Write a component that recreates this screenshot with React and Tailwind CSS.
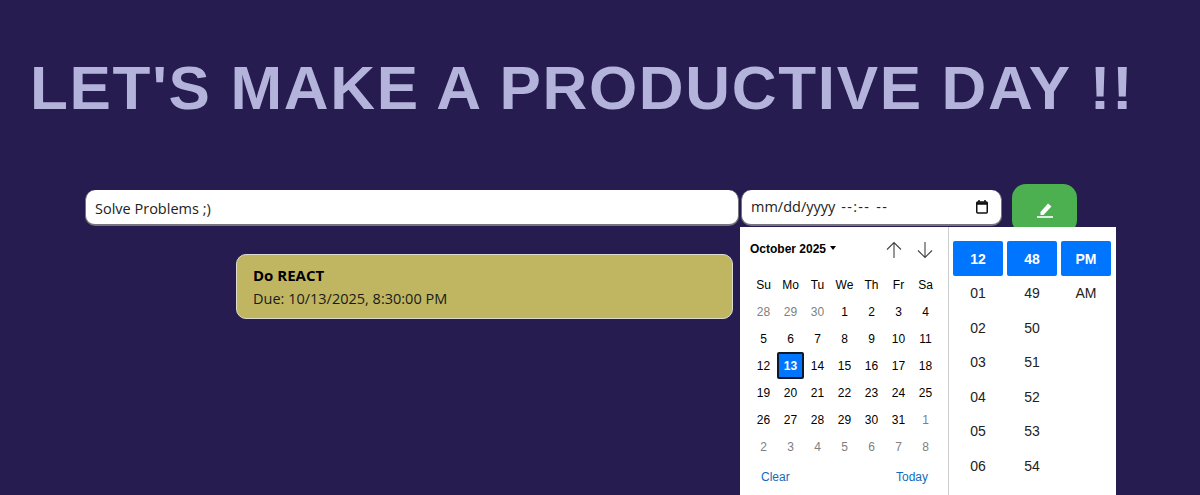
const weekDays = ["Su", "Mo", "Tu", "We", "Th", "Fr", "Sa"];
const prevDays = [28, 29, 30];
const monthDays = Array.from({ length: 31 }, (_, i) => i + 1);
const nextDays = [1, 2, 3, 4, 5, 6, 7, 8];
const hours = ["12", "01", "02", "03", "04", "05", "06"];
const minutes = ["48", "49", "50", "51", "52", "53", "54"];
const periods = ["PM", "AM"];

function TimeColumn({ items }) {
  return (
    <div className="flex w-[50px] flex-col">
      {items.map((item, index) => (
        <div
          key={item}
          className={
            index === 0
              ? "flex h-[35px] items-center justify-center rounded-[2px] bg-[#0075ff] text-sm font-bold text-white"
              : "flex h-[34.5px] items-center justify-center text-sm text-[#222]"
          }
        >
          {item}
        </div>
      ))}
    </div>
  );
}

function DatePopup() {
  return (
    <div className="absolute left-[655px] top-[43px] flex h-[268px] w-[376px] overflow-hidden bg-white font-['Liberation_Sans',sans-serif] text-black">
      <div className="w-[209px] border-r border-[#cfcfcf] pl-[10px]">
        <div className="flex h-[44px] items-start pt-[14px]">
          <span className="text-xs font-bold">October 2025</span>
          <span className="ml-[4px] mt-[5px] h-0 w-0 border-x-[3.5px] border-t-[4px] border-x-transparent border-t-black" />
          <svg className="ml-[49px]" width="18" height="18" viewBox="0 0 18 18" fill="none" stroke="#444" strokeWidth="1.1">
            <path d="M9 17V1.5M2 8.5 9 1.5l7 7" />
          </svg>
          <svg className="ml-[13px]" width="18" height="18" viewBox="0 0 18 18" fill="none" stroke="#444" strokeWidth="1.1">
            <path d="M9 1v15.5M2 9.5l7 7 7-7" />
          </svg>
        </div>
        <div className="grid w-[189px] grid-cols-7 text-xs">
          {weekDays.map((day) => (
            <div key={day} className="flex h-[27px] items-center justify-center">
              {day}
            </div>
          ))}
          {prevDays.map((day) => (
            <div key={"p" + day} className="flex h-[27px] items-center justify-center text-[#808080]">
              {day}
            </div>
          ))}
          {monthDays.map((day) => (
            <div
              key={day}
              className={
                day === 13
                  ? "flex h-[27px] items-center justify-center rounded-[2px] border-2 border-[#101828] bg-[#0075ff] font-bold text-white"
                  : "flex h-[27px] items-center justify-center"
              }
            >
              {day}
            </div>
          ))}
          {nextDays.map((day) => (
            <div key={"n" + day} className="flex h-[27px] items-center justify-center text-[#808080]">
              {day}
            </div>
          ))}
        </div>
        <div className="flex w-[189px] justify-between px-[11px] pt-[9px] text-xs text-[#0f6cbd]">
          <span>Clear</span>
          <span>Today</span>
        </div>
      </div>
      <div className="flex gap-[4px] pl-[4px] pt-[14px]">
        <TimeColumn items={hours} />
        <TimeColumn items={minutes} />
        <TimeColumn items={periods} />
      </div>
    </div>
  );
}

export default function App() {
  return (
    <div className="h-[495px] overflow-hidden bg-[#261c4f] font-['Open_Sans',sans-serif]">
      <h1 className="whitespace-nowrap pl-[30px] pt-[52px] font-['Liberation_Sans',sans-serif] text-[62px] leading-[72px] font-bold tracking-[1.68px] text-[#b3b3dc]">
        LET'S MAKE A PRODUCTIVE DAY !!
      </h1>
      <div className="relative ml-[85px] mt-[60px] w-[992px]">
        <div className="flex items-start">
          <input
            type="text"
            defaultValue="Solve Problems ;)"
            className="mt-[6px] h-[36px] w-[654px] rounded-[10px] border-x border-b-2 border-[#77747f] bg-white px-[9px] pt-[2px] text-[14.5px] text-[#222] outline-none"
          />
          <div className="ml-[2px] mt-[6px] flex h-[36px] w-[261px] items-center justify-between rounded-[10px] border-x border-b-2 border-[#77747f] bg-white pl-[9px] pr-[13px] text-[14.5px] text-[#222]">
            <span className="flex whitespace-pre">
              <span>mm/dd/yyyy</span>
              <span className="ml-[6px] tracking-[1.3px]">--:--</span>
              <span className="ml-[6px] tracking-[1.3px]">--</span>
            </span>
            <svg width="12" height="14" viewBox="0 0 12 14" fill="none" stroke="#111" strokeWidth="1.5">
              <rect x="0.75" y="2" width="10.5" height="11" rx="1" />
              <path d="M0.75 3.5h10.5" strokeWidth="2.5" />
              <path d="M3 0v2M9 0v2" />
            </svg>
          </div>
          <button
            type="button"
            aria-label="Add task"
            className="ml-[10px] flex h-[50px] w-[65px] items-start justify-center rounded-[14px] bg-[#4caf50] pt-[18px] text-white"
          >
            <svg width="16" height="16" viewBox="0 0 16 16" fill="white">
              <path d="M3.5 13V10L11 1.5l3.5 3L6.5 13z" />
              <rect x="0" y="14.2" width="16" height="1.6" />
            </svg>
          </button>
        </div>
        <div className="ml-[151px] mt-[20px] h-[65px] w-[497px] rounded-[10px] border border-[#dcdcd0] bg-[#c0b661] px-[16px] pt-[9px] text-[14.5px] leading-[23px] text-[#1a1a1a]">
          <div className="text-[15px] font-bold text-black">Do REACT</div>
          <div>Due: 10/13/2025, 8:30:00 PM</div>
        </div>
        <DatePopup />
      </div>
    </div>
  );
}
